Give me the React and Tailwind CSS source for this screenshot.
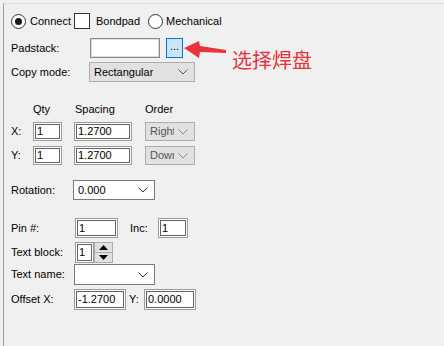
import React from "react";

const inputCls =
  "h-full bg-white border border-[#9b9b9b] shadow-[inset_0_0_0_1px_#ffffff,inset_0_0_0_2px_#646464] flex items-center pl-[3px] text-black";

function Chevron({ color = "#333" }) {
  return (
    <svg width="10" height="6" viewBox="0 0 10 6" className="shrink-0">
      <polyline points="0.5,0.5 5,5 9.5,0.5" fill="none" stroke={color} strokeWidth="1" />
    </svg>
  );
}

function Select({ w, text, gray, textColor = "text-black", chevColor = "#333", textW = "" }) {
  return (
    <div
      className={`h-full flex items-center justify-between pl-[4px] pr-[6px] border ${
        gray ? "bg-[#e1e1e1] border-[#adadad]" : "bg-white border-[#7a7a7a]"
      } ${w} overflow-hidden`}
    >
      <span className={`${textColor} ${textW} whitespace-nowrap overflow-hidden`}>{text}</span>
      <Chevron color={chevColor} />
    </div>
  );
}

function Radio({ checked }) {
  return (
    <div className="w-[15px] h-[15px] rounded-full border border-[#333] bg-white flex items-center justify-center shrink-0">
      {checked && <div className="w-[7px] h-[7px] rounded-full bg-[#1a1a1a]" />}
    </div>
  );
}

export default function App() {
  return (
    <div
      className="w-[444px] h-[346px] bg-[#f0f0f0] relative overflow-hidden text-[11px] leading-none text-black"
      style={{ fontFamily: '"Liberation Sans", Arial, sans-serif' }}
    >
      <div className="ml-[3px] mt-[3px] h-[343px] border-l border-l-[#a0a0a0] border-t border-t-[#dedede] pl-[7px] flex flex-col">
        {/* radios */}
        <div className="mt-[9px] h-[16px] flex items-center">
          <Radio checked />
          <span className="ml-[4px]">Connect</span>
          <div className="ml-[3px] w-[16px] h-[16px] bg-white border border-[#333]" />
          <span className="ml-[6px]">Bondpad</span>
          <div className="ml-[8px]">
            <Radio />
          </div>
          <span className="ml-[3px]">Mechanical</span>
        </div>

        {/* padstack */}
        <div className="mt-[9px] h-[20px] flex items-center">
          <span className="w-[79px]">Padstack:</span>
          <div className="w-[70px] h-full bg-white border border-[#8a8a8a] shadow-[inset_0_0_0_1px_#dcdcdc]" />
          <div className="ml-[6px] w-[17px] h-full bg-[#cce4f7] border border-[#0078d7] flex items-end justify-center pb-[5px]">
            <span className="leading-none">...</span>
          </div>
        </div>

        {/* copy mode */}
        <div className="mt-[4px] h-[20px] flex items-center">
          <span className="w-[78px]">Copy mode:</span>
          <Select w="w-[106px]" text="Rectangular" gray chevColor="#555" />
        </div>

        {/* headers */}
        <div className="mt-[20px] h-[14px] flex items-center">
          <span className="w-[22px]" />
          <span className="w-[42px]">Qty</span>
          <span className="w-[70px]">Spacing</span>
          <span>Order</span>
        </div>

        {/* X row */}
        <div className="mt-[6px] h-[19px] flex items-center">
          <span className="w-[22px]">X:</span>
          <div className={`${inputCls} w-[29px]`}>1</div>
          <div className={`${inputCls} w-[58px] ml-[12px]`}>1.2700</div>
          <div className="ml-[13px] h-full">
            <Select w="w-[50px]" text="Right" gray textColor="text-[#555]" chevColor="#888" textW="w-[24px]" />
          </div>
        </div>

        {/* Y row */}
        <div className="mt-[5px] h-[19px] flex items-center">
          <span className="w-[22px]">Y:</span>
          <div className={`${inputCls} w-[29px]`}>1</div>
          <div className={`${inputCls} w-[58px] ml-[12px]`}>1.2700</div>
          <div className="ml-[13px] h-full">
            <Select w="w-[50px]" text="Down" gray textColor="text-[#555]" chevColor="#888" textW="w-[24px]" />
          </div>
        </div>

        {/* rotation */}
        <div className="mt-[15px] h-[20px] flex items-center">
          <span className="w-[62px]">Rotation:</span>
          <Select w="w-[82px]" text="0.000" />
        </div>

        {/* pin */}
        <div className="mt-[18px] h-[20px] flex items-center">
          <span className="w-[64px]">Pin #:</span>
          <div className={`${inputCls} w-[43px]`}>1</div>
          <span className="ml-[12px] w-[28px]">Inc:</span>
          <div className={`${inputCls} w-[30px]`}>1</div>
        </div>

        {/* text block */}
        <div className="mt-[4px] h-[21px] flex items-center">
          <span className="w-[64px]">Text block:</span>
          <div className={`${inputCls} w-[19px]`}>1</div>
          <div className="w-[19px] h-full flex flex-col border border-[#adadad] bg-[#e1e1e1]">
            <div className="flex-1 flex items-center justify-center border-b border-[#adadad]">
              <svg width="9" height="5" viewBox="0 0 9 5">
                <polygon points="0,5 9,5 4.5,0" fill="#000" />
              </svg>
            </div>
            <div className="flex-1 flex items-center justify-center">
              <svg width="9" height="5" viewBox="0 0 9 5">
                <polygon points="0,0 9,0 4.5,5" fill="#000" />
              </svg>
            </div>
          </div>
        </div>

        {/* text name */}
        <div className="mt-[1px] h-[21px] flex items-center">
          <span className="w-[63px]">Text name:</span>
          <Select w="w-[81px]" text="" />
        </div>

        {/* offset */}
        <div className="mt-[4px] h-[21px] flex items-center">
          <span className="w-[63px]">Offset X:</span>
          <div className={`${inputCls} w-[52px]`}>-1.2700</div>
          <span className="ml-[3px] w-[15px]">Y:</span>
          <div className={`${inputCls} w-[52px]`}>0.0000</div>
        </div>
      </div>

      {/* annotation */}
      <svg
        className="absolute left-[180px] top-[36px]"
        width="50"
        height="26"
        viewBox="0 0 50 26"
      >
        <polygon
          points="4,12 19,5 20,10 46,14 46,17 20,16 19,22"
          fill="#e8323c"
        />
      </svg>
      <div
        className="absolute left-[232px] top-[50px] text-[20px] leading-none text-[#e8323c]"
        style={{ fontFamily: '"Noto Sans CJK SC", sans-serif' }}
      >
        选择焊盘
      </div>
    </div>
  );
}
